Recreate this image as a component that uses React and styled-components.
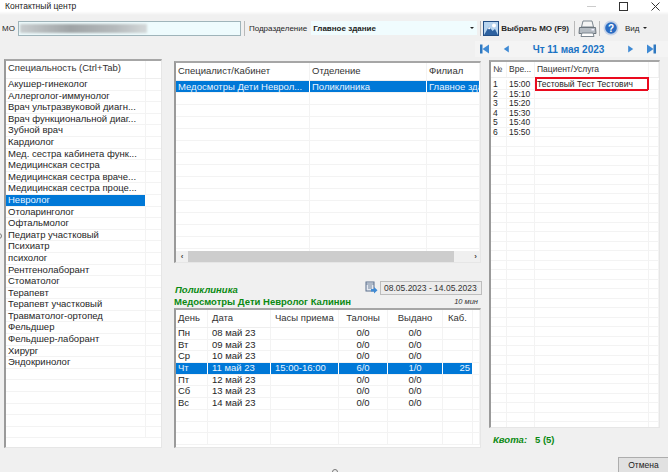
import React from "react";
import styled, { createGlobalStyle } from "styled-components";

const Global = createGlobalStyle`
  html, body { margin: 0; padding: 0; background: #f0f0f0; }
  #root { width: 668px; height: 472px; overflow: hidden; }
  * { box-sizing: border-box; }
`;

const Page = styled.div`
  position: relative;
  width: 668px;
  height: 472px;
  display: flex;
  flex-direction: column;
  background: #f0f0f0;
  color: #262626;
  font-family: "Liberation Sans", Arial, sans-serif;
  font-size: 9.5px;
  overflow: hidden;
`;

const TitleBar = styled.div`
  height: 15px;
  flex: none;
  display: flex;
  align-items: center;
  padding: 0 8px 3px 5px;
  background: linear-gradient(#fff 75%, #f0f0f0);
  font-size: 8.5px;
  color: #222;
`;
const TitleText = styled.span`
  flex: 1;
`;
const WindowControls = styled.div`
  display: flex;
  align-items: center;
  gap: 23px;
`;

const Toolbar = styled.div`
  height: 20px;
  flex: none;
  margin-top: 3px;
  display: flex;
  align-items: center;
  padding-left: 2px;
  font-size: 8px;
`;
const ToolLabel = styled.span`
  margin-right: ${(p) => p.$mr || 0}px;
`;
const MoInput = styled.div`
  width: 223px;
  height: 15px;
  padding: 2px 1px;
  border: 1px solid #9fb4ba;
  background: #eefbfd;
  overflow: hidden;
`;
const Blurred = styled.div`
  width: 127px;
  height: 100%;
  background: linear-gradient(90deg, #c8cdcf, #9fa4a6 40%, #b5babc 75%, #d3d8d9);
  filter: blur(1px);
`;
const Sep = styled.div`
  width: 1px;
  height: 15px;
  flex: none;
  margin: 0 ${(p) => p.$r ?? 3}px 0 ${(p) => p.$l ?? 3}px;
  background: #b9b9b9;
`;
const SelectBox = styled.div`
  width: 166px;
  height: 14px;
  margin-left: 4px;
  padding: 0 3px 0 2px;
  display: flex;
  align-items: center;
  justify-content: space-between;
  background: #f0fcfe;
  font-weight: bold;
  font-size: 8px;
  color: #1c1c1c;
`;
const Caret = styled.span`
  width: 0;
  height: 0;
  border-left: 2px solid transparent;
  border-right: 2px solid transparent;
  border-top: 2.5px solid #222;
`;
const ChooseButton = styled.div`
  display: flex;
  align-items: center;
  gap: 2px;
  font-weight: bold;
  font-size: 8px;
  white-space: nowrap;
`;
const ViewMenu = styled.div`
  display: flex;
  align-items: center;
  gap: 4px;
  margin-left: 6px;
  font-size: 8px;
`;

const NavRow = styled.div`
  height: 16px;
  flex: none;
  margin: 3px 0 0 475px;
  display: grid;
  grid-template-columns: 5px 9px 14px 7px 1fr 7px 13px 9px 12px;
  align-items: center;
  background: #f4f4f4;
`;
const NavDate = styled.div`
  text-align: center;
  color: #1a73c4;
  font-weight: bold;
  font-size: 10px;
`;
const NavSlot = styled.span`
  display: flex;
`;

const Body = styled.div`
  flex: none;
  height: 390px;
  margin-top: 2px;
  padding-left: 4px;
  display: flex;
  align-items: flex-start;
`;

const TablePanel = styled.div`
  display: flex;
  flex-direction: column;
  width: ${(p) => p.$w}px;
  height: ${(p) => p.$h}px;
  flex: none;
  background: #fff;
  border-left: 2px solid #9a9a9a;
  border-top: 2px solid #a6a6a6;
  border-right: 1px solid #e6e6e6;
  border-bottom: 1px solid #e6e6e6;
  overflow: hidden;
`;
const Rows = styled.div`
  flex: 1;
  min-height: 0;
  padding-top: ${(p) => p.$pt || 0}px;
  overflow: ${(p) => (p.$open ? "visible" : "hidden")};
`;
const Row = styled.div`
  display: grid;
  grid-template-columns: ${(p) => p.$cols};
  height: ${(p) => p.$h}px;
  line-height: ${(p) => p.$lh ?? p.$h - 1}px;
  border-bottom: 1px solid #f3f3f3;
  font-size: ${(p) => p.$fs || 9.5}px;
`;
const HeadRow = styled(Row)`
  border-bottom: 1px solid #eee;
  color: #333;
`;
const Cell = styled.div`
  position: relative;
  padding: 0 ${(p) => p.$pr ?? 2}px 0 ${(p) => p.$pl ?? 2}px;
  margin-right: ${(p) => (p.$sel ? 1 : 0)}px;
  white-space: nowrap;
  overflow: hidden;
  text-align: ${(p) => p.$align || "left"};
  background: ${(p) => (p.$sel ? "#0078d7" : "transparent")};
  color: ${(p) => (p.$sel ? "#e8f4ff" : "inherit")};
  border-right: ${(p) => (p.$sel ? "none" : "1px solid #f3f3f3")};
`;
const FlaggedCell = styled(Cell)`
  overflow: visible;
  &::after {
    content: "";
    position: absolute;
    top: -3px;
    bottom: -2px;
    left: 0;
    right: -1px;
    border: 2px solid #ea0a1e;
  }
`;

const MiddleColumn = styled.div`
  width: 308px;
  margin-left: 12px;
  margin-top: 2px;
  display: flex;
  flex-direction: column;
`;
const HScroll = styled.div`
  height: 11px;
  flex: none;
  display: grid;
  grid-template-columns: 12px 1fr 26px;
  align-items: center;
  background: #f0f0f0;
  font-size: 8px;
  font-weight: bold;
  color: #444;
  text-align: center;
`;
const HThumb = styled.div`
  height: 100%;
  background: #cdcdcd;
`;
const RightArrow = styled.span`
  text-align: right;
  padding-right: 3px;
`;

const ScheduleInfo = styled.div`
  height: 45px;
  flex: none;
  padding: 17px 0 0 0;
  display: grid;
  grid-template-columns: 1fr auto;
  grid-template-rows: 15px 13px;
  align-items: center;
`;
const Branch = styled.div`
  color: #0a8a12;
  font-weight: bold;
  font-style: italic;
  font-size: 9.5px;
  padding-left: 1px;
  align-self: end;
`;
const DatePick = styled.div`
  display: flex;
  align-items: center;
  gap: 2px;
  color: #333;
  font-size: 8.5px;
  white-space: nowrap;
`;
const DateCombo = styled.div`
  width: 102px;
  height: 14px;
  padding: 0 3px;
  display: flex;
  align-items: center;
  justify-content: space-between;
  border: 1px solid #bdbdbd;
  background: #ececec;
`;
const DoctorName = styled.div`
  color: #0a8a12;
  font-weight: bold;
  font-size: 9.5px;
`;
const Duration = styled.div`
  font-style: italic;
  font-size: 7.5px;
  padding-right: 4px;
  color: #333;
  text-align: right;
`;

const RightColumn = styled.div`
  width: 171px;
  margin-left: 7px;
  margin-top: 1px;
  display: flex;
  flex-direction: column;
`;
const Quota = styled.div`
  display: flex;
  margin-top: 6px;
  padding-left: 4px;
  color: #0a8a12;
  font-weight: bold;
  font-size: 9.5px;
`;
const QuotaLabel = styled.span`
  width: 42px;
  font-style: italic;
`;

const Footer = styled.div`
  flex: 1;
  display: flex;
  justify-content: flex-end;
  align-items: flex-end;
`;
const CancelButton = styled.div`
  width: 50px;
  height: 15px;
  line-height: 14px;
  text-align: center;
  background: #e1e1e1;
  border: 1px solid #adadad;
  border-right: none;
  border-bottom: none;
  font-size: 8.5px;
  color: #222;
`;
const EdgeDot = styled.div`
  position: absolute;
  width: 6px;
  height: 6px;
  border: 1px solid #777;
  border-radius: 50%;
  left: ${(p) => p.$x}px;
  top: ${(p) => p.$y}px;
`;

const NavIcon = ({ dir, bar }) => (
  <svg width="9" height="10" viewBox="0 0 9 10" style={{ transform: dir === "left" ? "scaleX(-1)" : "none" }}>
    <path d={bar ? "M0 0.5L6.5 5L0 9.5Z" : "M1.5 0.5L8 5L1.5 9.5Z"} fill="#3f8ad4" />
    {bar && <rect x="6.5" y="0.5" width="2.5" height="9" fill="#2f78c0" />}
  </svg>
);

const PictureIcon = () => (
  <svg width="16" height="15" viewBox="0 0 16 15">
    <rect x="0.5" y="0.5" width="15" height="14" fill="#b7d4ef" stroke="#234f86" />
    <circle cx="11" cy="4.5" r="2" fill="#fff" />
    <path d="M1 14L6 5.5L9.5 10L12 8L15 14Z" fill="#2e62a0" />
    <path d="M5 7.5L6 5.5L7.5 7.5L6 8.5Z" fill="#fff" />
  </svg>
);
const PrinterIcon = () => (
  <svg width="19" height="17" viewBox="0 0 19 17">
    <path d="M5 1H14L15.5 7H3.5Z" fill="#f4f4f4" stroke="#7d8790" />
    <path d="M1.5 7.5H17.5L18 13.5H1Z" fill="#b5bcc3" stroke="#6c757d" />
    <path d="M4 13H15L16 16.5H3Z" fill="#fff" stroke="#7d8790" />
    <rect x="13.5" y="9" width="2.5" height="1.5" fill="#eef" />
  </svg>
);
const HelpIcon = () => (
  <svg width="16" height="16" viewBox="0 0 16 16">
    <circle cx="8" cy="8" r="7.5" fill="#c6d3e8" />
    <circle cx="8" cy="8" r="5.8" fill="#2a6cc2" />
    <text x="8" y="11.5" fontSize="10" fontWeight="bold" fill="#fff" textAnchor="middle" fontFamily="Liberation Sans">?</text>
  </svg>
);
const CalendarIcon = () => (
  <svg width="13" height="13" viewBox="0 0 13 13">
    <rect x="1" y="1" width="8" height="9" fill="#e4e9f1" stroke="#5b6f8c" />
    <path d="M1 3H9M3 5H7M3 7H7" stroke="#5b6f8c" strokeWidth="0.8" />
    <path d="M6 8H9V6L12.5 9.3L9 12.5V10.5H6Z" fill="#3f8ad4" />
  </svg>
);
const Chevron = () => (
  <svg width="7" height="5" viewBox="0 0 7 5"><path d="M0.5 0.8L3.5 3.8L6.5 0.8" fill="none" stroke="#777" /></svg>
);

const specialties = [
  "Акушер-гинеколог", "Аллерголог-иммунолог", "Врач ультразвуковой диагн...",
  "Врач функциональной диаг...", "Зубной врач", "Кардиолог",
  "Мед. сестра кабинета функ...", "Медицинская сестра", "Медицинская сестра враче...",
  "Медицинская сестра проце...", "Невролог", "Отоларинголог", "Офтальмолог",
  "Педиатр участковый", "Психиатр", "психолог", "Рентгенолаборант", "Стоматолог",
  "Терапевт", "Терапевт участковый", "Травматолог-ортопед", "Фельдшер",
  "Фельдшер-лаборант", "Хирург", "Эндокринолог", "", "", "", "", "", "",
];
const week = [
  ["Пн", "08 май 23", "", "0/0", "0/0", ""],
  ["Вт", "09 май 23", "", "0/0", "0/0", ""],
  ["Ср", "10 май 23", "", "0/0", "0/0", ""],
  ["Чт", "11 май 23", "15:00-16:00", "6/0", "1/0", "25"],
  ["Пт", "12 май 23", "", "0/0", "0/0", ""],
  ["Сб", "13 май 23", "", "0/0", "0/0", ""],
  ["Вс", "14 май 23", "", "0/0", "0/0", ""],
  ["", "", "", "", "", ""],
  ["", "", "", "", "", ""],
  ["", "", "", "", "", ""],
];
const slots = [
  ["1", "15:00", "Тестовый Тест Тестович"], ["2", "15:10", ""], ["3", "15:20", ""],
  ["4", "15:30", ""], ["5", "15:40", ""], ["6", "15:50", ""],
  ...Array.from({ length: 31 }, () => ["", "", ""]),
];

const LEFT = "140px 16px";
const MID = "134px 117px 1fr";
const WEEK = "32px 63px 68px 49px 55px 30px 1fr";
const SLOT = "16px 28px 114px 1fr";

export default function App() {
  return (
    <Page>
      <Global />
      <TitleBar>
        <TitleText>Контактный центр</TitleText>
        <WindowControls>
          <svg width="9" height="9" viewBox="0 0 9 9"><path d="M0 4.5H9" stroke="#ccc" /></svg>
          <svg width="9" height="9" viewBox="0 0 9 9"><rect x="0.5" y="0.5" width="8" height="8" fill="none" stroke="#333" /></svg>
          <svg width="9" height="9" viewBox="0 0 9 9"><path d="M0.5 0.5L8.5 8.5M8.5 0.5L0.5 8.5" stroke="#333" /></svg>
        </WindowControls>
      </TitleBar>

      <Toolbar>
        <ToolLabel $mr={3}>МО</ToolLabel>
        <MoInput><Blurred /></MoInput>
        <Sep $l={3} $r={4} />
        <ToolLabel>Подразделение</ToolLabel>
        <SelectBox>Главное здание<Caret /></SelectBox>
        <Sep $l={3} $r={2} />
        <ChooseButton><PictureIcon />Выбрать МО (F9)</ChooseButton>
        <Sep $l={5} $r={3} />
        <PrinterIcon />
        <Sep $l={2} $r={3} />
        <HelpIcon />
        <ViewMenu>Вид<Caret /></ViewMenu>
      </Toolbar>

      <NavRow>
        <span />
        <NavSlot><NavIcon dir="left" bar /></NavSlot>
        <span />
        <NavSlot><NavIcon dir="left" /></NavSlot>
        <NavDate>Чт 11 мая 2023</NavDate>
        <NavSlot><NavIcon /></NavSlot>
        <span />
        <NavSlot><NavIcon bar /></NavSlot>
      </NavRow>

      <Body>
        <TablePanel $w={158} $h={389}>
          <HeadRow $cols={LEFT} $h={18} $lh={14}>
            <Cell>Специальность (Ctrl+Tab)</Cell>
            <Cell />
          </HeadRow>
          <Rows>
            {specialties.map((s, i) => (
              <Row key={i} $cols={LEFT} $h={11.6}>
                <Cell $sel={s === "Невролог"}>{s}</Cell>
                <Cell />
              </Row>
            ))}
          </Rows>
        </TablePanel>

        <MiddleColumn>
          <TablePanel $w={307} $h={202}>
            <HeadRow $cols={MID} $h={18} $lh={16}>
              <Cell>Специалист/Кабинет</Cell>
              <Cell>Отделение</Cell>
              <Cell>Филиал</Cell>
            </HeadRow>
            <Rows>
              <Row $cols={MID} $h={12}>
                <Cell $sel>Медосмотры Дети Неврол...</Cell>
                <Cell $sel>Поликлиника</Cell>
                <Cell $sel>Главное здание</Cell>
              </Row>
              {Array.from({ length: 14 }, (_, i) => (
                <Row key={i} $cols={MID} $h={12}><Cell /><Cell /><Cell /></Row>
              ))}
            </Rows>
            <HScroll>
              <span>‹</span>
              <HThumb />
              <RightArrow>›</RightArrow>
            </HScroll>
          </TablePanel>

          <ScheduleInfo>
            <Branch>Поликлиника</Branch>
            <DatePick>
              <CalendarIcon />
              <DateCombo>08.05.2023 - 14.05.2023<Chevron /></DateCombo>
            </DatePick>
            <DoctorName>Медосмотры Дети Невролог Калинин</DoctorName>
            <Duration>10 мин</Duration>
          </ScheduleInfo>

          <TablePanel $w={307} $h={140}>
            <HeadRow $cols={WEEK} $h={18} $lh={16}>
              <Cell>День</Cell>
              <Cell $pl={4}>Дата</Cell>
              <Cell $pl={4}>Часы приема</Cell>
              <Cell $align="center">Талоны</Cell>
              <Cell $align="center">Выдано</Cell>
              <Cell $align="center">Каб.</Cell>
              <Cell />
            </HeadRow>
            <Rows>
              {week.map((d, i) => {
                const sel = d[0] === "Чт";
                return (
                  <Row key={i} $cols={WEEK} $h={11.7}>
                    <Cell $sel={sel}>{d[0]}</Cell>
                    <Cell $sel={sel} $pl={4}>{d[1]}</Cell>
                    <Cell $sel={sel} $pl={4}>{d[2]}</Cell>
                    <Cell $sel={sel} $align="center">{d[3]}</Cell>
                    <Cell $sel={sel} $align="center">{d[4]}</Cell>
                    <Cell $sel={sel} $align="right">{d[5]}</Cell>
                    <Cell />
                  </Row>
                );
              })}
            </Rows>
          </TablePanel>
        </MiddleColumn>

        <RightColumn>
          <TablePanel $w={171} $h={368}>
            <HeadRow $cols={SLOT} $h={16} $fs={8.5} $lh={14}>
              <Cell>№</Cell>
              <Cell>Вре...</Cell>
              <Cell>Пациент/Услуга</Cell>
              <Cell />
            </HeadRow>
            <Rows $pt={2} $open>
              {slots.map((s, i) => {
                const NameCell = i === 0 ? FlaggedCell : Cell;
                return (
                  <Row key={i} $cols={SLOT} $h={9.5} $fs={8.5}>
                    <Cell>{s[0]}</Cell>
                    <Cell>{s[1]}</Cell>
                    <NameCell>{s[2]}</NameCell>
                    <Cell />
                  </Row>
                );
              })}
            </Rows>
          </TablePanel>
          <Quota>
            <QuotaLabel>Квота:</QuotaLabel>
            <span>5 (5)</span>
          </Quota>
        </RightColumn>
      </Body>

      <Footer><CancelButton>Отмена</CancelButton></Footer>
      <EdgeDot $x={-4} $y={233} />
      <EdgeDot $x={332} $y={469} />
    </Page>
  );
}
